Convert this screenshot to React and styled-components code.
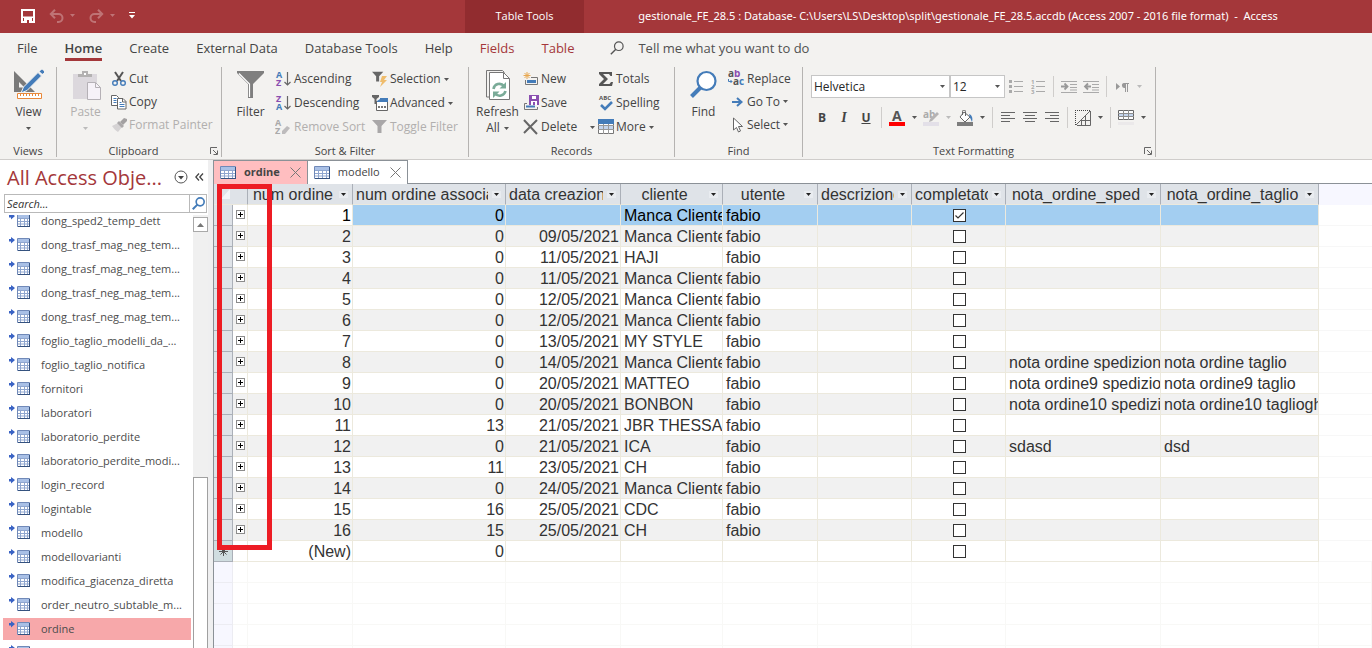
import React from 'react';
import styled, { createGlobalStyle, css } from 'styled-components';

const c = {
  red: '#a4373a', darkRed: '#912c2f', ribbon: '#f3f2f0', text: '#444444', off: '#b1afae',
  line: '#8b9197', head: '#dfe3e8', grid: '#ece9dd', blue: '#447cb9', orange: '#e8883a',
  gray: '#7a7a7a', purple: '#8a4fb0',
};

const Global = createGlobalStyle`
  *, *::before, *::after { box-sizing: border-box; }
  body { margin: 0; background: #fff; color: ${c.text}; font: 12px/16px "Open Sans", "Noto Sans", sans-serif; }
  button, input, select { font: inherit; color: inherit; margin: 0; border-radius: 0; }
  button { border: 0; padding: 0; background: none; display: flex; align-items: center; white-space: nowrap; }
  ul { list-style: none; margin: 0; padding: 0; }
  svg { display: block; flex: none; }
`;

const Shell = styled.div`
  height: 100vh; display: flex; flex-direction: column; overflow: hidden;
`;

/* ---------- title bar ---------- */
const TitleBar = styled.header`
  flex: none; height: 33px; display: flex; background: ${c.red}; color: #fff; font-size: 11px; padding-bottom: 2px;
`;
const QuickAccess = styled.div`
  width: 465px; display: flex; align-items: center; gap: 14px; padding-left: 21px;
  button { gap: 6px; }
`;
const ContextTitle = styled.div`
  width: 119px; background: ${c.darkRed}; display: flex; align-items: center; justify-content: center;
  margin-bottom: -2px; padding-bottom: 2px;
`;
const WindowTitle = styled.div`
  flex: 1; display: flex; align-items: center; justify-content: center; padding-right: 40px; white-space: pre;
  font-family: "Noto Sans", "Open Sans", sans-serif;
`;

/* ---------- ribbon ---------- */
const TabRow = styled.nav`
  flex: none; height: 33px; display: flex; align-items: flex-start; gap: 27px; padding: 4px 0 0 17px;
  background: ${c.ribbon}; font-size: 13px;
`;
const RibbonTab = styled.button`
  height: 24px; border-bottom: 3px solid ${p => (p.$active ? c.red : 'transparent')};
  font-weight: ${p => (p.$active ? 600 : 400)}; color: ${p => (p.$context ? c.red : c.text)};
`;
const TellMe = styled.label`
  height: 22px; display: flex; align-items: center; gap: 14px; margin-left: 9px; flex: 1;
  input { border: 0; background: none; padding: 0; width: 240px; outline: 0; }
  input::placeholder { color: #505050; opacity: 1; }
`;
const Ribbon = styled.div`
  flex: none; display: flex; height: 94px; padding: 1px 0 2px; background: ${c.ribbon};
  border-bottom: 1px solid #cfcdcb;
`;
const GroupBox = styled.section`
  width: ${p => p.$w}px; display: flex; flex-direction: column; border-right: 1px solid #b5b3b1;
`;
const GroupBody = styled.div`
  flex: 1; display: flex; align-items: flex-start; gap: 2px; padding-left: 6px;
`;
const GroupFoot = styled.div`
  height: 12px; display: flex; align-items: center; font-size: 11px; line-height: 12px;
  span { flex: 1; text-align: center; }
  button { margin-right: 3px; }
`;
const BigButton = styled.button`
  width: 45px; flex-direction: column; padding-top: 2px; line-height: 16px;
  color: ${p => (p.disabled ? c.off : c.text)};
  > svg { margin-bottom: 3px; }
`;
const SecondLine = styled.span`
  height: 16px; display: flex; align-items: center; gap: 4px;
`;
const Column = styled.div`
  display: flex; flex-direction: column; width: ${p => p.$w}px;
`;
const SmallButton = styled.button`
  height: ${p => p.$h}px; gap: 2px; color: ${p => (p.disabled ? c.off : c.text)};
`;
const IconSlot = styled.span`
  width: 17px; display: flex; justify-content: center;
`;
const CaretSlot = styled.span`
  margin-left: ${p => (p.$end ? 'auto' : '1px')};
`;
const FormatPanel = styled(GroupBody)`
  flex-direction: column; gap: 8px; padding: 8px 0 0 8px;
`;
const FormatRow = styled.div`
  height: 23px; display: flex; align-items: center;
`;
const SelectBox = styled.span`
  width: ${p => p.$w}px; height: 23px; display: flex; align-items: center; background: #fff; border: 1px solid #c6c6c6;
  padding-right: 4px;
  select { flex: 1; min-width: 0; height: 21px; appearance: none; border: 0; background: none; padding: 0 0 0 2px; color: #262626; outline: 0; }
`;
const Tool = styled.button`
  width: 22px; height: 22px; justify-content: center; font-weight: 700;
`;
const ItalicMark = styled.i`
  font-family: "Liberation Serif", serif; font-size: 14px;
`;
const Drop = styled.button`
  width: 12px; height: 22px; justify-content: center;
`;
const Bar = styled.span`
  width: 1px; height: 21px; margin: 0 4px; background: #cfcdcb;
`;

/* ---------- navigation pane ---------- */
const Workspace = styled.div`
  flex: 1; min-height: 0; display: flex;
`;
const Pane = styled.aside`
  width: 213px; flex: none; display: flex; flex-direction: column; background: #fff; border-right: 5px solid #efeff0;
`;
const PaneHead = styled.div`
  height: 34px; display: flex; align-items: center; padding: 0 4px 0 7px; gap: 7px;
  h1 { flex: 1; margin: 0; font-size: 20px; line-height: 28px; padding-top: 2px; font-weight: 400; color: ${c.red}; white-space: nowrap; }
`;
const SearchBox = styled.form`
  height: 19px; flex: none; display: flex; margin: 0 1px 2px 4px; border: 1px solid #b9b9b9;
  input { flex: 1; min-width: 0; border: 0; padding: 0 2px; font-size: 11px; font-style: italic; outline: 0; }
  input::placeholder { color: #333; opacity: 1; }
  button { width: 17px; justify-content: center; border-left: 1px solid #b9b9b9; }
`;
const PaneBody = styled.div`
  flex: 1; min-height: 0; display: flex; gap: 2px; padding-left: 3px;
`;
const ListClip = styled.div`
  flex: 1; min-width: 0; overflow: hidden;
  ul { display: flex; flex-direction: column; gap: 2px; margin-top: -5px; }
`;
const NavItem = styled.a`
  height: 22px; display: flex; align-items: center; gap: 10px; padding-left: 5px; font-size: 11px; white-space: nowrap;
  text-decoration: none; color: #4c4c4c; background: ${p => (p.$active ? '#f7a8aa' : 'transparent')};
`;
const ScrollTrack = styled.div`
  width: 15px; background: #f0f0f0; display: flex; flex-direction: column; padding-top: 2px;
  button { height: 15px; justify-content: center; background: #fff; border: 1px solid #a9a9a9; }
`;
const ScrollGap = styled.div`
  flex: 246;
`;
const ScrollThumb = styled.div`
  flex: 170; background: #fff; border: 1px solid #a0a0a0; border-bottom: 0;
`;

/* ---------- documents ---------- */
const Documents = styled.main`
  flex: 1; min-width: 0; display: flex; flex-direction: column; border-left: 1px solid ${c.line};
`;
const DocTabs = styled.div`
  flex: none; height: 24px; display: flex;
  &::after { content: ''; flex: 1; border-bottom: 1px solid ${c.line}; }
`;
const DocTab = styled.div`
  display: flex; align-items: center; gap: 8px; padding: 0 6px; border: solid ${c.line}; border-width: 1px 1px 0 0; font-size: 11px;
  background: ${p => (p.$active ? '#ffbec0' : '#fff')}; font-weight: ${p => (p.$active ? 700 : 400)};
  span { line-height: 14px; padding-bottom: 2px; }
  button:last-child { margin-left: 2px; }
`;
const GridArea = styled.div`
  flex: 1; min-height: 0; overflow: hidden; position: relative;
`;
const Highlight = styled.div`
  position: absolute; left: 3px; top: 0; width: 55px; height: 366px; border: 5px solid #ed1c24; pointer-events: none;
`;
const Sheet = styled.table`
  width: 100%; table-layout: fixed; border-collapse: separate; border-spacing: 0;
  font: 16px/19px "Liberation Sans", Arial, sans-serif; color: #333;
`;
const cell = css`
  height: 21px; padding: 0; overflow: hidden; white-space: nowrap; font-weight: 400;
`;
const HeadCell = styled.th`
  ${cell} background: ${c.head}; border-right: 1px solid #abb0b8; border-bottom: 1px solid ${c.grid};
`;
const HeadBlank = styled.td`
  ${cell} background: ${p => (p.$outer ? '#f7f7ff' : c.head)};
  border-right: ${p => (p.$rule ? '1px solid #abb0b8' : 0)}; border-bottom: 1px solid ${p => (p.$outer ? '#f7f7ff' : c.grid)};
`;
const HeadInner = styled.div`
  display: flex; align-items: center; height: 20px; padding: 1px 4px 0 3px; gap: 4px;
  span { flex: 1; min-width: 0; overflow: hidden; text-align: ${p => (p.$clip ? 'left' : 'center')}; }
`;
const HeadDrop = styled.button`
  width: 9px; height: 7px; justify-content: center; background: #e9ecf0;
`;
const Row = styled.tr`
  background: ${p => (p.$alt ? '#f1f1f1' : '#fff')}; color: ${p => (p.$current ? '#000' : 'inherit')};
`;
const Cell = styled.td`
  ${cell} border-right: 1px solid ${c.grid}; border-bottom: 1px solid ${c.grid};
  padding: 1px ${p => (p.$right ? 1 : 0)}px 0 3px; text-align: ${p => (p.$right ? 'right' : 'left')};
  background: ${p => (p.$picked ? '#a3cef1' : 'transparent')};
`;
const MarkCell = styled(Cell)`
  padding: ${p => (p.$top ? '0' : '0 0 0 1px')};
  > * { margin: ${p => (p.$top ? '0 auto 2px' : '0 auto')}; }
`;
const Selector = styled.td`
  ${cell} background: ${p => (p.$fresh ? '#d0dde0' : c.head)}; border-right: 1px solid #abb0b8; border-bottom: 1px solid #abb0b8;
  svg { margin: 0 auto; }
`;
const Outside = styled.td`
  ${cell} background: #fff; border-bottom: 1px solid #f7f7f7;
`;
const Faint = styled.td`
  ${cell} background: ${p => (p.$first ? '#f7f7ff' : '#fff')};
  border-right: 1px solid ${p => (p.$first ? '#ececf2' : '#f8f8f6')}; border-bottom: 1px solid ${p => (p.$first ? '#ececf2' : '#f8f8f6')};
`;
const Expand = styled.button`
  width: 9px; height: 9px; background: #fff; border: 1px solid #8c8c8c; justify-content: center;
`;
const Tick = styled.input`
  display: block; appearance: none; width: 13px; height: 13px; border: 1px solid #333; background: #fff;
  &:checked { background: #fff url("data:image/svg+xml,%3Csvg xmlns='http://www.w3.org/2000/svg' viewBox='0 0 11 11'%3E%3Cpath d='M1.5 5.5 4 8 9.5 2.5' fill='none' stroke='%23333' stroke-width='1.2'/%3E%3C/svg%3E"); }
`;

/* ---------- icons ---------- */
const Svg = ({ w = 16, h = w, children }) => (
  <svg width={w} height={h} viewBox={`0 0 ${w} ${h}`} fill="none" aria-hidden="true">{children}</svg>
);
const Caret = ({ color = '#555' }) => <Svg w={5} h={3}><path d="M0 0h5L2.5 3z" fill={color} /></Svg>;

const SaveIcon = () => (
  <Svg w={14}><path d="M1 1h12v12H1z" stroke="#fff" strokeWidth="2" /><path d="M2 7.5h10v1.5H2zM3 9h8v5H3z" fill="#fff" /><path d="M6 11h2v3H6z" fill={c.red} /></Svg>
);
const UndoIcon = ({ flip }) => (
  <Svg w={15} h={14}>
    <g transform={flip ? 'matrix(-1 0 0 1 15 0)' : undefined} stroke="#bf7375" strokeWidth="2">
      <path d="M1.5 5h8a4 4 0 0 1 0 8H8M6 .8 1.8 5 6 9.2" />
    </g>
  </Svg>
);
const CustomizeIcon = () => <Svg w={6} h={7}><path d="M0 0h6v1H0zM0 3h6L3 6.5z" fill="#fff" /></Svg>;
const LoupeIcon = ({ w = 14, color = '#555', sw = 1.2 }) => (
  <svg width={w} height={w} viewBox="0 0 14 14" fill="none" aria-hidden="true"><circle cx="8.8" cy="5.2" r="4.3" stroke={color} strokeWidth={sw} /><path d="M5.8 8.2.8 13.2" stroke={color} strokeWidth={sw * 1.2} /></svg>
);
const ViewIcon = () => (
  <Svg w={32}>
    <path d="M1 2v21h21L1 2zm5 11 5.500 5.500H6z" fill={c.gray} fillRule="evenodd" />
    <path d="M25 3.500 10.500 18l-2.500 6L14 21.500 28.500 7z" fill={c.blue} stroke={c.ribbon} />
    <path d="M26.500 2.500 28.500.800h1l1.500 1.500v1L29.500 5z" fill={c.blue} />
    <path d="M4.500 24.500h24v5h-24z" fill="#fff" stroke={c.orange} />
    <path d="M7.500 25v2m3-2v2m3-2v2m3-2v2m3-2v2m3-2v2m3-2v2" stroke={c.orange} />
  </Svg>
);
const PasteIcon = () => (
  <Svg w={32}>
    <path d="M3 5h24v25H3z" fill="#dcd8dd" /><path d="M8 8V5h4V2h6v3h4v3z" fill="#b3b1b1" /><path d="M14 4h2v2h-2z" fill="#fff" />
    <path d="M17.500 13.500h8l5 5v12h-13z" fill="#f6f2f8" stroke="#b5b1b6" /><path d="M25.500 13.500v5h5" stroke="#b5b1b6" />
  </Svg>
);
const CutIcon = () => (
  <Svg><path d="M4 1l6 9M12 1 6 10" stroke="#555" strokeWidth="2" /><circle cx="4" cy="12" r="2.300" stroke={c.blue} strokeWidth="1.400" /><circle cx="12" cy="12" r="2.300" stroke={c.blue} strokeWidth="1.400" /></Svg>
);
const CopyIcon = () => (
  <Svg><path d="M6 11.500H.5v-10h5l2 2v1" fill="#fff" stroke="#666" /><path d="M2.500 4.500h3m-3 2h3m-3 2h3" stroke={c.blue} />
    <path d="M6.500 4.500h5.500l3 3v7.500H6.500z" fill="#fff" stroke="#666" /><path d="M11.500 4.500v3.500H15" stroke="#666" /><path d="M8.500 8.500h2m-2 2h5m-5 2h5" stroke={c.blue} /></Svg>
);
const PainterIcon = () => (
  <Svg><path d="M1 9l6-3 4 4-4 5c-2-1-4-3-6-6z" fill="#d5d3d4" /><path d="m6 6 2-2 5 5-2 2z" fill="#aaa8a9" /><path d="m9 5 4-4 3 1v2l-4 4z" fill="#a3a1a2" /></Svg>
);
const Funnel = ({ color }) => <path d="M0 1h15L9.500 7v7h-4V7z" fill={color} />;
const BigFunnel = () => (
  <Svg w={32}><path d="M2 2h27v2L18 15v14h-5V15L2 4z" fill="#7f7f7f" /><path d="M4 4.500 14.500 15v13" stroke="#fff" strokeWidth="1.200" /></Svg>
);
const Letter = ({ x, y, fill, size = 9, children }) => (
  <text x={x} y={y} fill={fill} fontSize={size} fontWeight="700" fontFamily="Open Sans">{children}</text>
);
const SortIcon = ({ desc }) => (
  <Svg w={17}><Letter x={1} y={7} fill={desc ? c.purple : c.blue}>{desc ? 'Z' : 'A'}</Letter><Letter x={1} y={15} fill={desc ? c.blue : c.purple}>{desc ? 'A' : 'Z'}</Letter>
    <path d="M12.500 1v13M9.500 11l3 3 3-3" stroke="#666" strokeWidth="1.200" /></Svg>
);
const ClearSortIcon = () => (
  <Svg w={17}><Letter x={0} y={7} fill="#aaa">A</Letter><Letter x={0} y={15} fill="#aaa">Z</Letter><path d="m7 12 5-5 3 2-5 6-3 0z" fill="#bdbbbc" /></Svg>
);
const SelectionIcon = () => <Svg><g transform="scale(.75)"><Funnel color="#666" /></g><path d="M10 5h5l-3 4h3l-7 7 2-5H8z" fill="#efbc6b" /></Svg>;
const AdvancedIcon = () => (
  <Svg><path d="M0 0h7v2L4.500 4v5h-2V4L0 2z" fill="#666" /><path d="M4.500 6v9.500h11V3.500H8" fill="#fff" stroke="#666" /><path d="M8 3h8v4H5V6l3-2z" fill={c.blue} /><path d="M6 11h2v2H6zm3 0h2v2H9zm3 0h2v2h-2z" fill="#777" /></Svg>
);
const ToggleIcon = () => <Svg><Funnel color="#a9a7a8" /></Svg>;
const RefreshIcon = () => (
  <Svg w={28} h={32}><path d="M5 28H2.500V1.500h16l2 2" stroke="#777" /><path d="M5.500 3.500h14l6 6v21h-20z" fill="#fff" stroke="#777" /><path d="M19.500 3.500v6h6" stroke="#777" />
    <path d="M9.500 20a6 6 0 0 1 10.500-3M21.500 22a6 6 0 0 1-10.500 2.500" stroke="#7aab98" strokeWidth="2.600" /><path d="M22 13v6.500h-6.500zM9 29v-6.500h6.500z" fill="#7aab98" /></Svg>
);
const NewIcon = () => (
  <Svg><path d="M4 1v7M.5 4.500h7M1.500 2l5 5M6.500 2l-5 5" stroke="#e8a850" /><path d="M8 6.500h6.500v7H2.500V9" stroke="#777" /><path d="M4 9h9v3H4z" fill={c.blue} /></Svg>
);
const SaveRecordIcon = () => (
  <Svg><path d="M4 8.500H1.500v6h13V12" stroke="#777" /><path d="M3 10.500h9v2H3z" fill={c.blue} /><path d="M6 0h10v10H6z" fill={c.purple} /><path d="M9 1h4v3H9zM8 6h6v4H8z" fill="#fff" /><path d="M10 7h2v3h-2z" fill={c.purple} /></Svg>
);
const DeleteIcon = () => <Svg><path d="m1 1 13 14M14 1 1 14" stroke="#666" strokeWidth="2" /></Svg>;
const SumIcon = () => <Svg><path d="M1 1h13v4h-1.500L11 3H5l5 5-5 5h6.500l1.500-2H15l-1 4H1v-2l5-5-5-5z" fill="#555" /></Svg>;
const SpellingIcon = () => <Svg><Letter x={1} y={5} size={6} fill="#555">ABC</Letter><path d="m3 10 4 4 7-7" stroke={c.blue} strokeWidth="2.600" /></Svg>;
const MoreIcon = () => (
  <Svg><path d="M.5.5h15v14H.5z" fill="#fff" stroke="#777" /><path d="M0 0h16v5H0z" fill={c.blue} /><path d="M1 7h14v3H1z" fill="#c3d4ec" /><path d="M0 10.500h16M0 6.500h16M5.500 5v10m5-10v10" stroke="#999" /></Svg>
);
const FindIcon = () => (
  <Svg w={32}><circle cx="18.500" cy="12" r="9" fill="#fff" stroke={c.blue} strokeWidth="2.200" /><path d="M12.500 18.500 3.500 27.500" stroke={c.blue} strokeWidth="4" /></Svg>
);
const ReplaceIcon = () => (
  <Svg w={17}><Letter x={0} y={7} size={10} fill="#555">a</Letter><Letter x={6} y={7} size={10} fill={c.purple}>b</Letter><Letter x={5} y={15} size={10} fill="#555">a</Letter><Letter x={11} y={15} size={10} fill={c.blue}>c</Letter>
    <path d="M.5 9v2.500H4M2.500 10 4 11.500 2.500 13" stroke={c.blue} /></Svg>
);
const GoToIcon = () => <Svg w={14}><path d="M2 7h9M7 3l4.500 4L7 11" stroke={c.blue} strokeWidth="2" /></Svg>;
const PointerIcon = () => <Svg><path d="M4.500 1v12l3-2.500 2 4.500 2-1-2-4.500h4z" fill="#fff" stroke="#666" /></Svg>;
const LauncherIcon = () => <Svg w={8}><path d="M.5 7V.5H7M3 3l4 4M7.500 3.500v4h-4" stroke="#666" /></Svg>;

const ListIcon = ({ numbered }) => (
  <Svg w={15}>
    <path d="M5 2.500h9M5 7.500h9M5 12.500h9" stroke="#aaa" />
    {numbered
      ? <><Letter x={0} y={5} size={6} fill="#aaa">1</Letter><Letter x={0} y={10} size={6} fill="#aaa">2</Letter><Letter x={0} y={15} size={6} fill="#aaa">3</Letter></>
      : <path d="M0 1h3v3H0zM0 6h3v3H0zM0 11h3v3H0z" fill="#aaa" />}
  </Svg>
);
const IndentIcon = ({ back }) => (
  <Svg w={16} h={14}><path d="M0 1.500h16M9 4.500h7M9 7.500h7M0 12.500h16M9 10h7" stroke="#aaa" /><path d={back ? 'M8 6.500H2M5 3.500l-3 3 3 3' : 'M0 6.500h6M3.500 3.500l3 3-3 3'} stroke="#999" strokeWidth="1.800" /></Svg>
);
const ParaIcon = () => <Svg w={13} h={10}><path d="M0 1v7l4-3.500z" fill="#999" /><path d="M8 1h5v1h-1v8h-1V2h-1v8H9V6a2.500 2.500 0 0 1-1-5z" fill="#999" /></Svg>;
const FontColorIcon = () => <Svg><path d="M0 12h16v4H0z" fill="#f00" /><text x="3" y="11" fontSize="14" fontWeight="700" fill="#555" fontFamily="Open Sans">A</text></Svg>;
const MarkerIcon = () => <Svg><path d="M0 12h16v4H0z" fill="#e3e0e8" /><Letter x={0} y={8} size={10} fill="#aaa">ab</Letter><path d="m14 2 2 2-7 7-3 1 1-3z" fill="#b5b3b4" /></Svg>;
const FillIcon = () => (
  <Svg><path d="M0 12h16v4H0z" fill="#7d7d7d" /><path d="m7 2 6 5-5 5-5-5z" fill="#fff" stroke="#666" /><path d="M5.500 5V1.500a1.500 1.500 0 0 1 3 0V6" stroke="#666" /><path d="M12 4c3 1 4 4 3 8-1-2-1-3-2-4z" fill={c.blue} /></Svg>
);
const AlignIcon = ({ d }) => <Svg w={14} h={12}><path d={d} stroke="#666" /></Svg>;
const GridlinesIcon = () => (
  <Svg><path d="M0 .5h16M.5 0v16" stroke="#444" strokeDasharray="1 1" /><path d="M1 15 15 1M15.500 1v14.500H2M6 10.500h9M10.500 6v9M6.500 10v5" stroke="#666" /></Svg>
);
const AltRowIcon = () => (
  <Svg><path d="M0 12h16v3H0z" fill="#ebe9ea" /><path d="M.5.5h15v9H.5z" fill="#fff" stroke="#666" /><path d="M1 4h14v2H1z" fill="#c3d4ec" /><path d="M0 3.500h16M0 6.500h16M5.500 0v10m5-10v10" stroke="#8c8c8c" /></Svg>
);
const TableGlyph = ({ x = 0, y = 0, w = 13 }) => (
  <g transform={`translate(${x} ${y})`}>
    <path d={`M.5.5h${w - 1}v12H.5z`} fill="#fff" stroke="#7089b8" /><path d={`M1 1h${w - 2}v3H1z`} fill="#a9c0e6" />
    <path d={`M1 4.500h${w - 2}M1 7.500h${w - 2}M1 10h${w - 2}M${Math.round(w / 4) + 0.5} 4v8.500M${Math.round(w / 2) + 0.5} 4v8.500M${Math.round(w * 0.75) + 0.5} 4v8.500`} stroke="#8fa6cf" />
    <path d={`M${w - 0.5} 1v12M1 12.500h${w - 1}`} stroke="#35527f" />
  </g>
);
const LinkedTableIcon = () => (
  <Svg w={23}><g transform="translate(0 3)"><path d="M1 2h2V0l4 3-4 3.500V4.500H1z" fill="#3a63c4" /><TableGlyph x={9} y={1} /></g></Svg>
);
const SheetIcon = () => <Svg w={16} h={13}><TableGlyph w={16} /></Svg>;
const CloseIcon = () => <Svg w={11}><path d="m.5.500 10 10m0-10-10 10" stroke="#777" /></Svg>;
const CircleDown = () => <Svg w={14}><circle cx="7" cy="7" r="6" stroke="#555" /><path d="M4 6h6L7 9.500z" fill="#444" /></Svg>;
const ChevronsLeft = () => <Svg w={9} h={8}><path d="M4 .5.800 4 4 7.500M8 .5 4.800 4 8 7.500" stroke="#444" strokeWidth="1.300" /></Svg>;
const PlusIcon = () => <Svg w={5}><path d="M0 2.500h5M2.500 0v5" stroke="#000" /></Svg>;
const StarIcon = () => <Svg w={9}><path d="M4.500 0v9M0 4.500h9M1.500 1.500l6 6M7.500 1.500l-6 6" stroke="#555" /></Svg>;
const CornerIcon = () => <Svg w={17} h={10}><path d="M16 0v10H7z" fill="#f3f5f8" /></Svg>;

/* ---------- data ---------- */
const tabs = ['File', 'Home', 'Create', 'External Data', 'Database Tools', 'Help', 'Fields', 'Table'];
const objects = [
  'dong_sped2_temp_dett', 'dong_trasf_mag_neg_tem...', 'dong_trasf_mag_neg_tem...', 'dong_trasf_neg_mag_tem...',
  'dong_trasf_neg_mag_tem...', 'foglio_taglio_modelli_da_...', 'foglio_taglio_notifica', 'fornitori', 'laboratori',
  'laboratorio_perdite', 'laboratorio_perdite_modi...', 'login_record', 'logintable', 'modello', 'modellovarianti',
  'modifica_giacenza_diretta', 'order_neutro_subtable_m...', 'ordine', '',
];
const columns = [
  { name: 'num ordine', w: 105 },
  { name: 'num ordine associato', w: 153, clip: true },
  { name: 'data creazione', w: 115, clip: true },
  { name: 'cliente', w: 102 },
  { name: 'utente', w: 95 },
  { name: 'descrizione', w: 94, clip: true },
  { name: 'completato', w: 94, clip: true },
  { name: 'nota_ordine_sped', w: 155 },
  { name: 'nota_ordine_taglio', w: 158 },
];
const rows = [
  [1, 0, '', 'Manca Cliente'],
  [2, 0, '09/05/2021', 'Manca Cliente'],
  [3, 0, '11/05/2021', 'HAJI'],
  [4, 0, '11/05/2021', 'Manca Cliente'],
  [5, 0, '12/05/2021', 'Manca Cliente'],
  [6, 0, '12/05/2021', 'Manca Cliente'],
  [7, 0, '13/05/2021', 'MY STYLE'],
  [8, 0, '14/05/2021', 'Manca Cliente', 'nota ordine spedizione', 'nota ordine taglio'],
  [9, 0, '20/05/2021', 'MATTEO', 'nota ordine9 spedizione', 'nota ordine9 taglio'],
  [10, 0, '20/05/2021', 'BONBON', 'nota ordine10 spedizione', 'nota ordine10 tagliogh'],
  [11, 13, '21/05/2021', 'JBR THESSA'],
  [12, 0, '21/05/2021', 'ICA', 'sdasd', 'dsd'],
  [13, 11, '23/05/2021', 'CH'],
  [14, 0, '24/05/2021', 'Manca Cliente'],
  [15, 16, '25/05/2021', 'CDC'],
  [16, 15, '25/05/2021', 'CH'],
];

/* ---------- composed parts ---------- */
const Group = ({ title, w, launcher, children }) => (
  <GroupBox $w={w} aria-label={title}>
    {children}
    <GroupFoot><span>{title}</span>{launcher && <button type="button" aria-label={`${title} options`}><LauncherIcon /></button>}</GroupFoot>
  </GroupBox>
);
const Command = ({ icon, label, caret, caretEnd, disabled, h = 24 }) => (
  <SmallButton type="button" disabled={disabled} $h={h}>
    <IconSlot>{icon}</IconSlot>{label}{caret && <CaretSlot $end={caretEnd}><Caret /></CaretSlot>}
  </SmallButton>
);
const Split = ({ label, icon, off }) => (
  <>
    <Tool type="button" aria-label={label}>{icon}</Tool>
    <Drop type="button" aria-label={`${label} menu`}><Caret color={off ? '#bbb' : undefined} /></Drop>
  </>
);
const OrderRow = ({ data, index }) => {
  const [id, linked, date, client, ship, cut] = data;
  const current = index === 0;
  return (
    <Row $alt={index % 2 === 1} $current={current}>
      <Selector />
      <MarkCell $top><Expand type="button" aria-label={`Expand ${id}`}><PlusIcon /></Expand></MarkCell>
      <Cell $right>{id}</Cell>
      <Cell $right $picked={current}>{linked}</Cell>
      <Cell $right $picked={current}>{date}</Cell>
      <Cell $picked={current}>{client}</Cell>
      <Cell $picked={current}>fabio</Cell>
      <Cell $picked={current} />
      <MarkCell $picked={current}><Tick type="checkbox" defaultChecked={current} aria-label={`completato ${id}`} /></MarkCell>
      <Cell $picked={current}>{ship}</Cell>
      <Cell $picked={current}>{cut}</Cell>
      <Outside />
    </Row>
  );
};

export default function App() {
  return (
    <Shell>
      <Global />
      <TitleBar>
        <QuickAccess>
          <button type="button" aria-label="Save"><SaveIcon /></button>
          <button type="button" aria-label="Undo"><UndoIcon /><Caret color="#bf7375" /></button>
          <button type="button" aria-label="Redo"><UndoIcon flip /><Caret color="#bf7375" /></button>
          <button type="button" aria-label="Customize"><CustomizeIcon /></button>
        </QuickAccess>
        <ContextTitle>Table Tools</ContextTitle>
        <WindowTitle>{'gestionale_FE_28.5 : Database- C:\\Users\\LS\\Desktop\\split\\gestionale_FE_28.5.accdb (Access 2007 - 2016 file format)  -  Access'}</WindowTitle>
      </TitleBar>

      <TabRow>
        {tabs.map(t => <RibbonTab key={t} type="button" $active={t === 'Home'} $context={t === 'Fields' || t === 'Table'}>{t}</RibbonTab>)}
        <TellMe><LoupeIcon /><input aria-label="Tell me" placeholder="Tell me what you want to do" /></TellMe>
      </TabRow>

      <Ribbon>
        <Group title="Views" w={57}>
          <GroupBody><BigButton type="button"><ViewIcon />View<SecondLine><Caret /></SecondLine></BigButton></GroupBody>
        </Group>
        <Group title="Clipboard" w={165} launcher>
          <GroupBody>
            <BigButton type="button" disabled><PasteIcon />Paste<SecondLine><Caret color="#bbb" /></SecondLine></BigButton>
            <Column>
              <Command h={23} icon={<CutIcon />} label="Cut" />
              <Command h={23} icon={<CopyIcon />} label="Copy" />
              <Command h={23} icon={<PainterIcon />} label="Format Painter" disabled />
            </Column>
          </GroupBody>
        </Group>
        <Group title="Sort & Filter" w={247}>
          <GroupBody>
            <BigButton type="button"><BigFunnel />Filter</BigButton>
            <Column $w={94}>
              <Command icon={<SortIcon />} label="Ascending" />
              <Command icon={<SortIcon desc />} label="Descending" />
              <Command icon={<ClearSortIcon />} label="Remove Sort" disabled />
            </Column>
            <Column>
              <Command icon={<SelectionIcon />} label="Selection" caret />
              <Command icon={<AdvancedIcon />} label="Advanced" caret />
              <Command icon={<ToggleIcon />} label="Toggle Filter" disabled />
            </Column>
          </GroupBody>
        </Group>
        <Group title="Records" w={206}>
          <GroupBody>
            <BigButton type="button"><RefreshIcon />Refresh<SecondLine>All<Caret /></SecondLine></BigButton>
            <Column $w={73}>
              <Command icon={<NewIcon />} label="New" />
              <Command icon={<SaveRecordIcon />} label="Save" />
              <Command icon={<DeleteIcon />} label="Delete" caret caretEnd />
            </Column>
            <Column>
              <Command icon={<SumIcon />} label="Totals" />
              <Command icon={<SpellingIcon />} label="Spelling" />
              <Command icon={<MoreIcon />} label="More" caret />
            </Column>
          </GroupBody>
        </Group>
        <Group title="Find" w={128}>
          <GroupBody>
            <BigButton type="button"><FindIcon />Find</BigButton>
            <Column>
              <Command h={23} icon={<ReplaceIcon />} label="Replace" />
              <Command h={23} icon={<GoToIcon />} label="Go To" caret />
              <Command h={23} icon={<PointerIcon />} label="Select" caret />
            </Column>
          </GroupBody>
        </Group>
        <Group title="Text Formatting" w={353} launcher>
          <FormatPanel>
            <FormatRow>
              <SelectBox $w={139}><select aria-label="Font"><option>Helvetica</option></select><Caret /></SelectBox>
              <SelectBox $w={55}><select aria-label="Font size"><option>12</option></select><Caret /></SelectBox>
              <Tool type="button" aria-label="Bullets"><ListIcon /></Tool>
              <Tool type="button" aria-label="Numbering"><ListIcon numbered /></Tool>
              <Bar />
              <Tool type="button" aria-label="Increase indent"><IndentIcon /></Tool>
              <Tool type="button" aria-label="Decrease indent"><IndentIcon back /></Tool>
              <Bar />
              <Split label="Direction" icon={<ParaIcon />} off />
            </FormatRow>
            <FormatRow>
              <Tool type="button">B</Tool>
              <Tool type="button"><ItalicMark>I</ItalicMark></Tool>
              <Tool type="button"><u>U</u></Tool>
              <Bar />
              <Split label="Font color" icon={<FontColorIcon />} />
              <Split label="Highlight" icon={<MarkerIcon />} off />
              <Split label="Fill" icon={<FillIcon />} />
              <Bar />
              <Tool type="button" aria-label="Align left"><AlignIcon d="M0 .5h14M0 3.500h9M0 6.500h14M0 9.500h9" /></Tool>
              <Tool type="button" aria-label="Center"><AlignIcon d="M0 .5h14M2 3.500h10M0 6.500h14M2 9.500h10" /></Tool>
              <Tool type="button" aria-label="Align right"><AlignIcon d="M0 .5h14M5 3.500h9M0 6.500h14M5 9.500h9" /></Tool>
              <Bar />
              <Split label="Gridlines" icon={<GridlinesIcon />} />
              <Bar />
              <Split label="Alternate row color" icon={<AltRowIcon />} />
            </FormatRow>
          </FormatPanel>
        </Group>
      </Ribbon>

      <Workspace>
        <Pane>
          <PaneHead>
            <h1>All Access Obje...</h1>
            <button type="button" aria-label="Filter objects"><CircleDown /></button>
            <button type="button" aria-label="Collapse"><ChevronsLeft /></button>
          </PaneHead>
          <SearchBox>
            <input aria-label="Search" placeholder="Search..." />
            <button type="button" aria-label="Search"><LoupeIcon w={13} color={c.blue} sw={1.8} /></button>
          </SearchBox>
          <PaneBody>
            <ListClip>
              <ul>
                {objects.map((o, i) => <li key={i}><NavItem href="#" $active={o === 'ordine'}><LinkedTableIcon />{o}</NavItem></li>)}
              </ul>
            </ListClip>
            <ScrollTrack>
              <button type="button" aria-label="Scroll up"><Svg w={7} h={4}><path d="M0 4h7L3.500 0z" fill="#777" /></Svg></button>
              <ScrollGap /><ScrollThumb />
            </ScrollTrack>
          </PaneBody>
        </Pane>

        <Documents>
          <DocTabs>
            <DocTab $active><SheetIcon /><span>ordine</span><button type="button" aria-label="Close ordine"><CloseIcon /></button></DocTab>
            <DocTab><SheetIcon /><span>modello</span><button type="button" aria-label="Close modello"><CloseIcon /></button></DocTab>
          </DocTabs>
          <GridArea>
            <Sheet>
              <colgroup>
                <col width="19" /><col width="15" />
                {columns.map(k => <col key={k.name} width={k.w} />)}
                <col />
              </colgroup>
              <thead>
                <tr>
                  <HeadBlank><CornerIcon /></HeadBlank>
                  <HeadBlank $rule />
                  {columns.map(k => (
                    <HeadCell key={k.name} scope="col">
                      <HeadInner $clip={k.clip}><span>{k.name}</span><HeadDrop type="button" aria-label={`Sort ${k.name}`}><Caret color="#222" /></HeadDrop></HeadInner>
                    </HeadCell>
                  ))}
                  <HeadBlank $outer />
                </tr>
              </thead>
              <tbody>
                {rows.map((r, i) => <OrderRow key={r[0]} data={r} index={i} />)}
                <Row>
                  <Selector $fresh><StarIcon /></Selector>
                  <Cell /><Cell $right>(New)</Cell><Cell $right>0</Cell><Cell /><Cell /><Cell /><Cell />
                  <MarkCell><Tick type="checkbox" aria-label="completato new" /></MarkCell>
                  <Cell /><Cell /><Outside />
                </Row>
                {[0, 1, 2, 3, 4].map(n => (
                  <tr key={n} aria-hidden="true">{Array.from({ length: 12 }, (_, k) => <Faint key={k} $first={k === 0} />)}</tr>
                ))}
              </tbody>
            </Sheet>
            <Highlight />
          </GridArea>
        </Documents>
      </Workspace>
    </Shell>
  );
}
